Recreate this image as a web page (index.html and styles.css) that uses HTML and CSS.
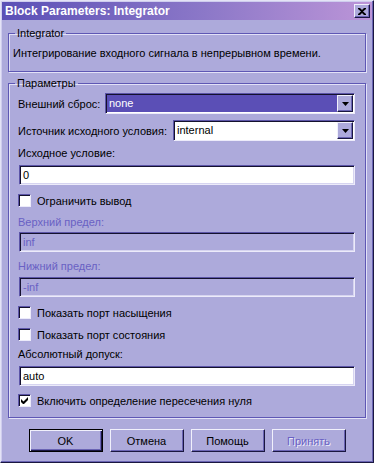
FILE: index.html
```html
<!DOCTYPE html>
<html lang="ru">

<head>
    <meta charset="UTF-8">
    <meta name="viewport" content="width=device-width, initial-scale=1.0">
    <title>Block Parameters: Integrator</title>
    <link rel="stylesheet" href="styles.css">
</head>

<body>
    <div class="window">
        <div class="titlebar">
            <span class="title">Block Parameters: Integrator</span>
            <span class="close-button">
                <svg width="8" height="7" viewBox="0 0 8 7">
                    <path d="M0 0h2l2 2 2-2h2v1L5 3.5 8 6v1H6L4 5 2 7H0V6l3-2.5L0 1z" fill="#000" />
                </svg>
            </span>
        </div>

        <div class="content">
            <fieldset class="group group-info">
                <legend>Integrator</legend>
                <p class="description">Интегрирование входного сигнала в непрерывном времени.</p>
            </fieldset>

            <fieldset class="group group-params">
                <legend>Параметры</legend>

                <div class="field-row">
                    <span class="label">Внешний сброс:</span>
                    <div class="select select-wide select-active">
                        <span class="select-value">none</span>
                        <span class="select-arrow">
                            <svg width="7" height="4" viewBox="0 0 7 4"><path d="M0 0h7L3.5 4z" fill="#000" /></svg>
                        </span>
                    </div>
                </div>

                <div class="field-row second-row">
                    <span class="label">Источник исходного условия:</span>
                    <div class="select select-narrow">
                        <span class="select-value">internal</span>
                        <span class="select-arrow">
                            <svg width="7" height="4" viewBox="0 0 7 4"><path d="M0 0h7L3.5 4z" fill="#000" /></svg>
                        </span>
                    </div>
                </div>

                <div class="label gap-5">Исходное условие:</div>
                <div class="input gap-5">0</div>

                <div class="check gap-9"><span class="box"></span>Ограничить вывод</div>

                <div class="label disabled gap-8">Верхний предел:</div>
                <div class="input input-disabled gap-3">inf</div>

                <div class="label disabled gap-7">Нижний предел:</div>
                <div class="input input-disabled gap-4">-inf</div>

                <div class="check gap-9"><span class="box"></span>Показать порт насыщения</div>
                <div class="check gap-9"><span class="box"></span>Показать порт состояния</div>

                <div class="label gap-6">Абсолютный допуск:</div>
                <div class="input gap-5">auto</div>

                <div class="check gap-8">
                    <span class="box">
                        <svg width="7" height="7" viewBox="0 0 7 7"><path d="M0 2v3l2 2h1l4-4V0L2.5 4.5z" fill="#000" /></svg>
                    </span>Включить определение пересечения нуля
                </div>
            </fieldset>

            <div class="buttons">
                <span class="button button-default">OK</span>
                <span class="button">Отмена</span>
                <span class="button">Помощь</span>
                <span class="button button-disabled">Принять</span>
            </div>
        </div>
    </div>
</body>

</html>
```

FILE: styles.css
```css
body {
    margin: 0;
    padding: 0;
    font-family: "Liberation Sans", Arial, sans-serif;
    font-size: 11px;
    line-height: 14px;
    color: #000;
    background-color: #adaadb;
}

.window {
    width: 374px;
    height: 463px;
    box-sizing: border-box;
    padding: 1px;
    border: 1px solid;
    border-color: #e4e3f6 #1a1740 #1a1740 #e4e3f6;
    box-shadow: inset -1px -1px 0 #6a64b4, inset 1px 1px 0 #cfcdee;
    background-color: #adaadb;
}

.titlebar {
    height: 18px;
    display: flex;
    align-items: center;
    justify-content: space-between;
    padding: 0 2px 0 3px;
    background: linear-gradient(to right, #5b50b6, #8c78c8 55%, #bc95d8);
}

.title {
    color: #fff;
    font-weight: bold;
    font-size: 12px;
}

.close-button {
    width: 14px;
    height: 12px;
    display: flex;
    align-items: center;
    justify-content: center;
    background-color: #adaadb;
    border: 1px solid;
    border-color: #f0f0fc #1a1740 #1a1740 #f0f0fc;
    box-shadow: inset -1px -1px 0 #6a64b4;
}

.content {
    padding: 6px 6px 0;
}

.group {
    margin: 0;
    min-width: 0;
    border: 1px solid #5e57b4;
    box-shadow: 1px 1px 0 #e2e1f7, inset 1px 1px 0 #e2e1f7;
}

.group legend {
    padding: 0 2px;
    margin-left: -3px;
    line-height: 14px;
}

.group-info {
    padding: 0 10px 11px 9px;
}

.description {
    margin: 6px 0 0 -5px;
}

.group-params {
    margin-top: 4px;
    padding: 3px 10px 10px 9px;
    display: flex;
    flex-direction: column;
}

.field-row {
    display: flex;
    align-items: center;
    justify-content: space-between;
}

.field-row .label {
    flex: none;
    white-space: nowrap;
}

.second-row {
    margin-top: 6px;
}

.label {
    height: 14px;
}

.disabled {
    color: #6961c4;
}

.gap-3 { margin-top: 3px; }
.gap-4 { margin-top: 4px; }
.gap-5 { margin-top: 5px; }
.gap-6 { margin-top: 6px; }
.gap-7 { margin-top: 7px; }
.gap-8 { margin-top: 8px; }
.gap-9 { margin-top: 9px; }

.select {
    flex: none;
    height: 21px;
    box-sizing: border-box;
    display: flex;
    border: 1px solid;
    border-color: #5c55a8 #ecebfa #ecebfa #5c55a8;
    box-shadow: inset 1px 1px 0 #14112e;
    background-color: #fff;
    padding: 1px;
}

.select-wide {
    width: 250px;
}

.select-narrow {
    width: 182px;
}

.select-value {
    flex: 1;
    padding-left: 2px;
    line-height: 17px;
}

.select-active .select-value {
    background-color: #5b4fb6;
    color: #fff;
}

.select-arrow {
    width: 16px;
    box-sizing: border-box;
    display: flex;
    align-items: center;
    justify-content: center;
    background-color: #adaadb;
    border: 1px solid;
    border-color: #f0f0fc #1a1740 #1a1740 #f0f0fc;
    box-shadow: inset -1px -1px 0 #6a64b4;
}

.input {
    height: 20px;
    box-sizing: border-box;
    margin-left: 1px;
    padding: 2px 3px 0;
    border: 1px solid;
    border-color: #5c55a8 #ecebfa #ecebfa #5c55a8;
    box-shadow: inset 1px 1px 0 #14112e, inset -1px -1px 0 #d6d4f0;
    background-color: #fff;
    line-height: 15px;
}

.input-disabled {
    background-color: #adaadb;
    color: #6961c4;
}

.check {
    height: 13px;
    display: flex;
    align-items: center;
}

.box {
    width: 13px;
    height: 13px;
    box-sizing: border-box;
    margin-right: 6px;
    display: flex;
    align-items: center;
    justify-content: center;
    border: 1px solid;
    border-color: #5c55a8 #ecebfa #ecebfa #5c55a8;
    box-shadow: inset 1px 1px 0 #14112e;
    background-color: #fff;
}

.buttons {
    margin-top: 11px;
    display: flex;
    justify-content: center;
    gap: 7px;
}

.button {
    width: 74px;
    height: 23px;
    box-sizing: border-box;
    display: flex;
    align-items: center;
    justify-content: center;
    border: 1px solid;
    border-color: #f0f0fc #1a1740 #1a1740 #f0f0fc;
    box-shadow: inset -1px -1px 0 #6a64b4;
    font-size: 11px;
}

.button-default {
    border-color: #000;
    box-shadow: inset 1px 1px 0 #f0f0fc, inset -1px -1px 0 #1a1740, inset -2px -2px 0 #6a64b4;
}

.button-disabled {
    color: #6961c4;
    text-shadow: 1px 1px 0 #ecebfa;
}
```
